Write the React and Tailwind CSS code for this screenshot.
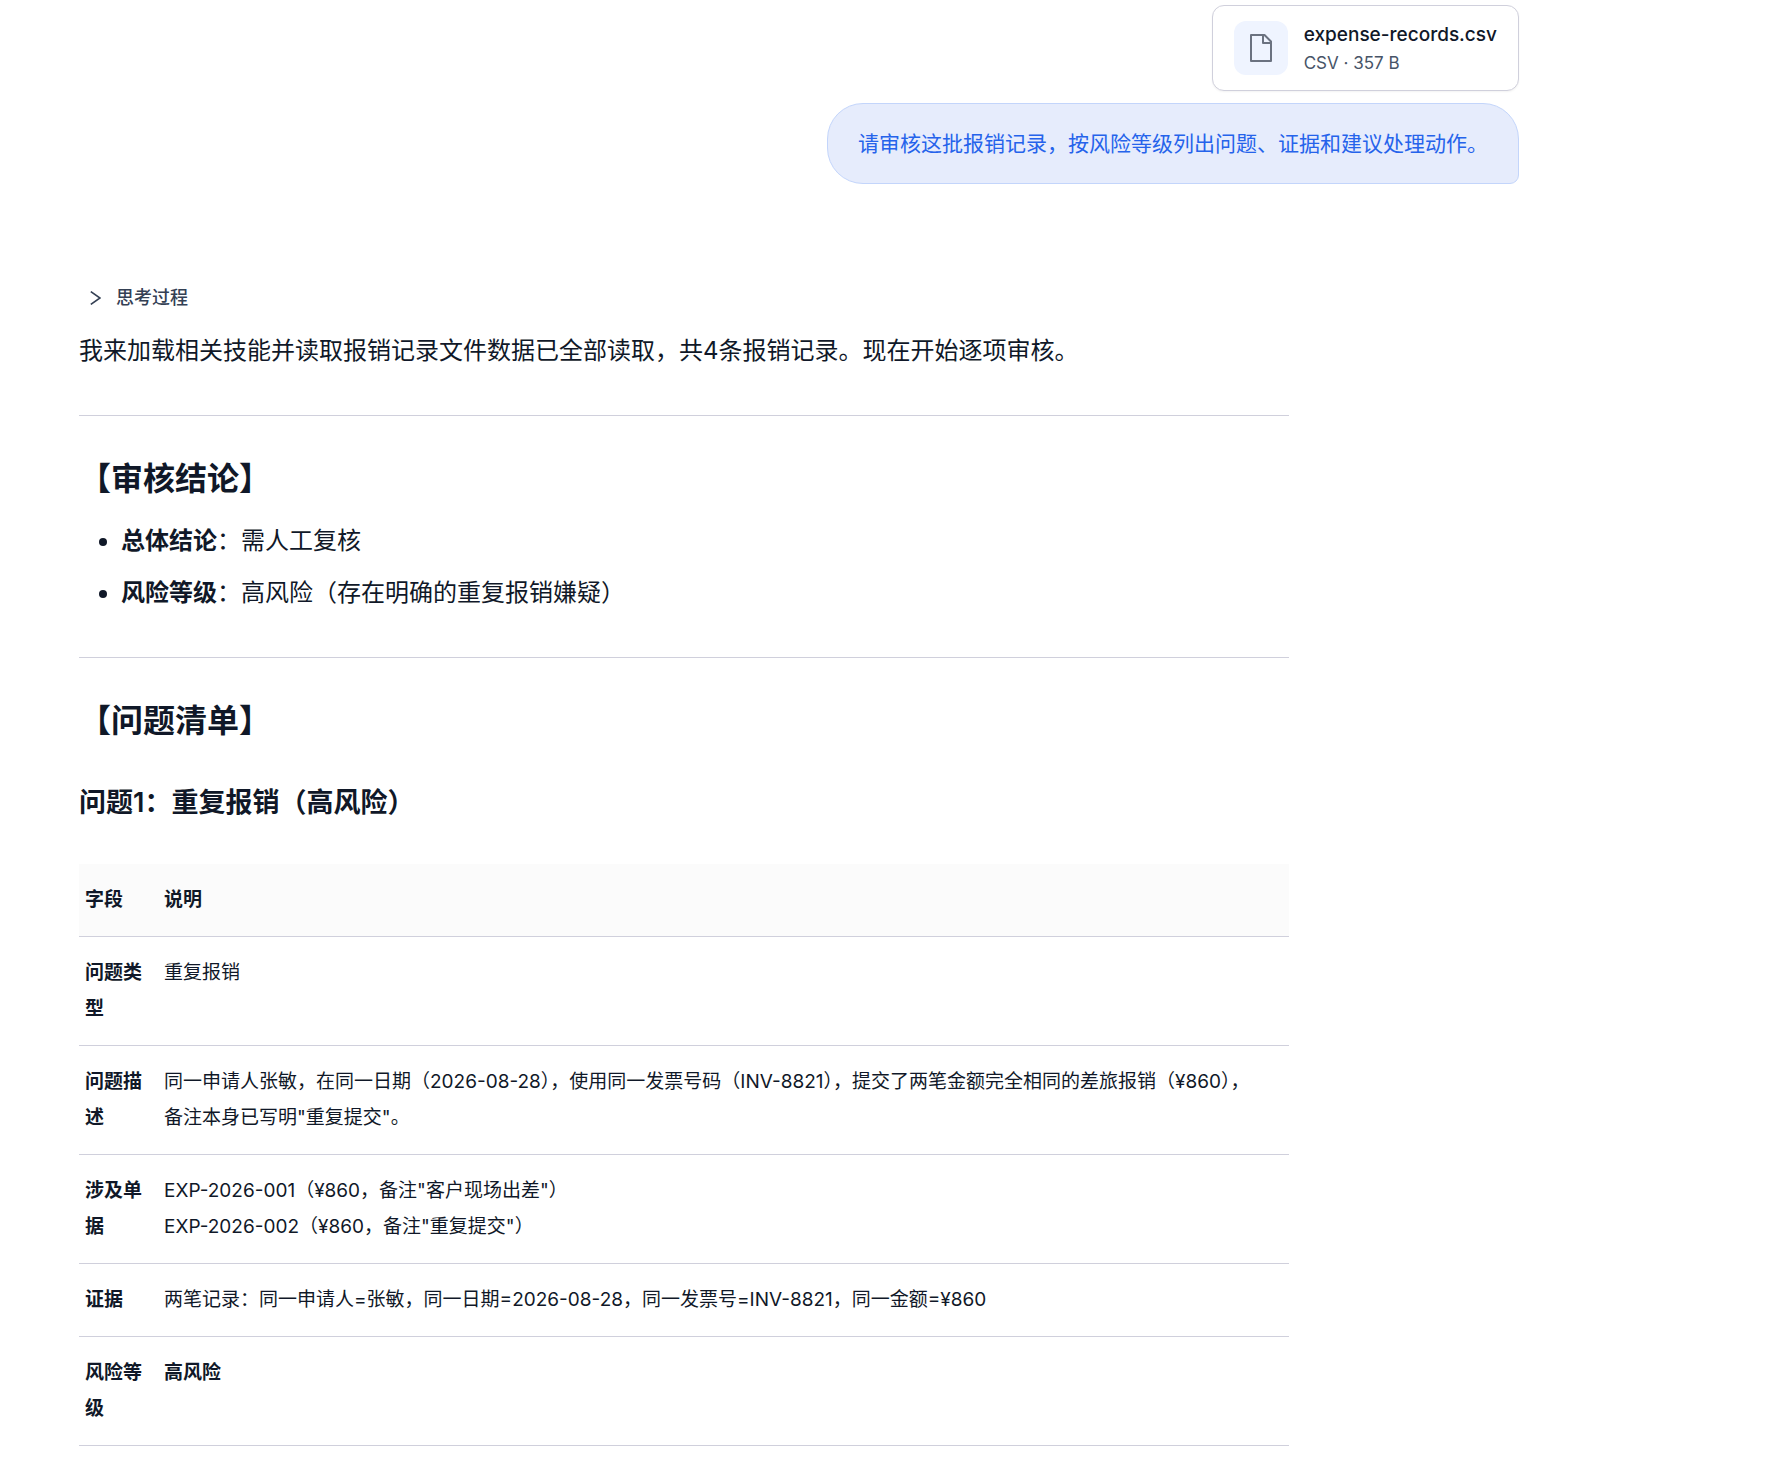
const problemRows = [
  { field: '问题类型', lines: ['重复报销'] },
  {
    field: '问题描述',
    lines: [
      '同一申请人张敏，在同一日期（2026-08-28），使用同一发票号码（INV-8821），提交了两笔金额完全相同的差旅报销（¥860），备注本身已写明"重复提交"。',
    ],
  },
  {
    field: '涉及单据',
    lines: ['EXP-2026-001（¥860，备注"客户现场出差"）', 'EXP-2026-002（¥860，备注"重复提交"）'],
  },
  {
    field: '证据',
    lines: ['两笔记录：同一申请人=张敏，同一日期=2026-08-28，同一发票号=INV-8821，同一金额=¥860'],
  },
  { field: '风险等级', lines: ['高风险'], strong: true },
];

const conclusions = [
  { label: '总体结论', value: '需人工复核' },
  { label: '风险等级', value: '高风险（存在明确的重复报销嫌疑）' },
];

function FileIcon() {
  return (
    <svg
      width="22"
      height="28"
      viewBox="0 0 22 28"
      fill="none"
      stroke="#6b7280"
      strokeWidth="2"
      strokeLinejoin="round"
      aria-hidden="true"
    >
      <path d="M1 1H14.5L21 7.5V27H1Z" />
      <path d="M13 1V9H21" />
    </svg>
  );
}

function FileCard({ name, meta }) {
  return (
    <div className="flex items-center gap-4 rounded-xl border border-[#d0d0dc] bg-white px-[21px] py-[14px] shadow-xs">
      <div className="flex size-[54px] items-center justify-center rounded-xl bg-[#eff4ff]">
        <FileIcon />
      </div>
      <div>
        <p className="text-[19px] leading-[30px] font-medium text-[#101828]">{name}</p>
        <p className="text-[17px] leading-[26px] text-[#475467]">{meta}</p>
      </div>
    </div>
  );
}

function UserMessage() {
  return (
    <div className="flex flex-col items-end gap-3">
      <FileCard name="expense-records.csv" meta="CSV · 357 B" />
      <p className="rounded-[36px] rounded-br-[9px] border border-[#c3d5fb] bg-[#e6ecfc] px-[30px] py-[22px] text-[21px] leading-[35px] text-[#2563eb]">
        请审核这批报销记录，按风险等级列出问题、证据和建议处理动作。
      </p>
    </div>
  );
}

function ProblemTable() {
  return (
    <table className="w-full table-fixed border-collapse text-left text-[19px] leading-[36px]">
      <thead>
        <tr className="border-b border-[#d0d0dc] bg-[#fbfbfb]">
          <th className="w-[79px] py-[18px] pl-[6px] font-semibold">字段</th>
          <th className="py-[18px] pl-[6px] font-semibold">说明</th>
        </tr>
      </thead>
      <tbody>
        {problemRows.map((row) => (
          <tr key={row.field} className="border-b border-[#d0d0dc] align-top">
            <th scope="row" className="py-[18px] pr-[12px] pl-[6px] font-semibold">
              {row.field}
            </th>
            <td className={row.strong ? 'py-[18px] pr-6 pl-[6px] font-semibold' : 'py-[18px] pr-6 pl-[6px]'}>
              {row.lines.map((line) => (
                <div key={line}>{line}</div>
              ))}
            </td>
          </tr>
        ))}
      </tbody>
    </table>
  );
}

function AssistantMessage() {
  return (
    <article className="mt-[96px] pr-[230px] text-[24px] leading-[36px] text-[#101828]">
      <button type="button" className="flex items-center gap-[15px] pl-[11px] text-[18px] leading-[36px] font-medium text-[#344054]">
        <svg width="11" height="14" viewBox="0 0 11 14" fill="none" stroke="currentColor" strokeWidth="1.6" aria-hidden="true">
          <path d="M0.8 0.6L10 7L0.8 13.4" />
        </svg>
        思考过程
      </button>
      <p className="mt-[17px]">我来加载相关技能并读取报销记录文件数据已全部读取，共4条报销记录。现在开始逐项审核。</p>

      <hr className="mt-[46px] border-[#d0d0dc]" />
      <h2 className="mt-[42px] text-[32px] leading-[42px] font-semibold">【审核结论】</h2>
      <ul className="mt-[23px] list-disc space-y-4 pl-[42px]">
        {conclusions.map((item) => (
          <li key={item.label}>
            <strong className="font-semibold">{item.label}</strong>：{item.value}
          </li>
        ))}
      </ul>

      <hr className="mt-[46px] border-[#d0d0dc]" />
      <h2 className="mt-[42px] text-[32px] leading-[42px] font-semibold">【问题清单】</h2>
      <h3 className="mt-[42px] mb-[42px] text-[27px] leading-[38px] font-semibold">问题1：重复报销（高风险）</h3>
      <ProblemTable />
    </article>
  );
}

export default function App() {
  return (
    <main className="min-h-screen bg-white pt-[5px] pr-[257px] pl-[79px] font-['Inter','Noto_Sans_CJK_SC',sans-serif]" lang="zh-CN">
      <UserMessage />
      <AssistantMessage />
    </main>
  );
}
